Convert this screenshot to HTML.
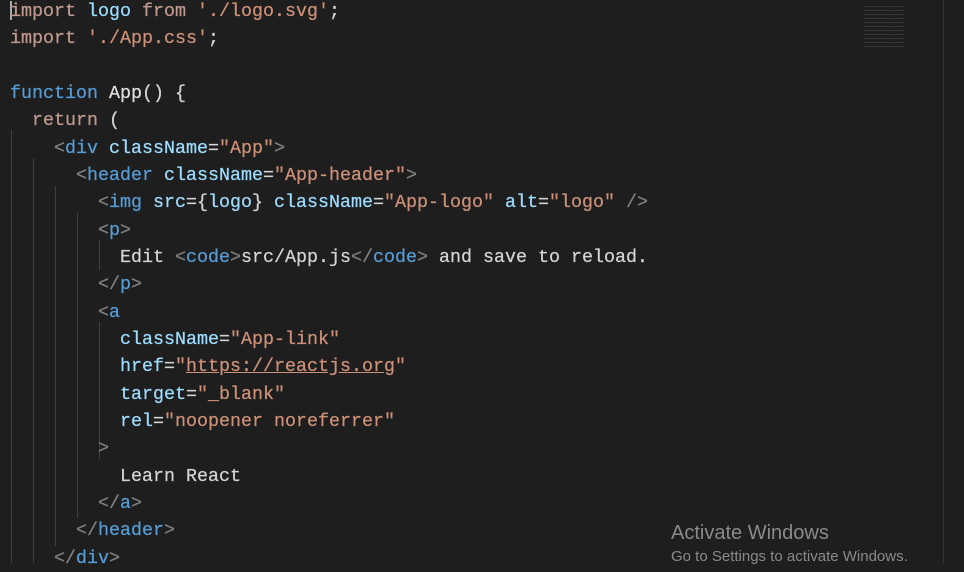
<!DOCTYPE html>
<html><head><style>
body{margin:0;width:964px;height:563px;background:#1e1e1e;overflow:hidden;position:relative;font-family:"Liberation Mono",monospace}
#code{position:absolute;left:10px;top:-2px;font-size:18.33px;line-height:27.33px;white-space:pre;color:#d4d4d4;-webkit-text-stroke:0.25px}
.k{color:#c09a8f}.s{color:#ce9178}.v{color:#9cdcfe}.f{color:#569cd6}.p{color:#808080}.t{color:#569cd6}.a{color:#9cdcfe}.w{color:#e0e0e0}
.g{position:absolute;width:1px;background:#404040}
.wm{position:absolute;font-family:"Liberation Sans",sans-serif;color:#8a8a8a}
</style></head><body>
<div class="g" style="left:11px;top:130px;height:433px"></div>
<div class="g" style="left:33px;top:158px;height:405px"></div>
<div class="g" style="left:55px;top:186px;height:360px"></div>
<div class="g" style="left:77px;top:213px;height:305px"></div>
<div class="g" style="left:99px;top:240px;height:30px"></div>
<div class="g" style="left:99px;top:322px;height:137px"></div>
<div style="position:absolute;left:10px;top:1px;width:2px;height:19px;background:#aaa"></div>
<div id="code"><span class="k">import</span> <span class="v">logo</span> <span class="k">from</span> <span class="s">'./logo.svg'</span>;
<span class="k">import</span> <span class="s">'./App.css'</span>;

<span class="f">function</span> <span class="w">App</span>() {
  <span class="k">return</span> (
    <span class="p">&lt;</span><span class="t">div</span> <span class="a">className</span>=<span class="s">"App"</span><span class="p">&gt;</span>
      <span class="p">&lt;</span><span class="t">header</span> <span class="a">className</span>=<span class="s">"App-header"</span><span class="p">&gt;</span>
        <span class="p">&lt;</span><span class="t">img</span> <span class="a">src</span>={<span class="v">logo</span>} <span class="a">className</span>=<span class="s">"App-logo"</span> <span class="a">alt</span>=<span class="s">"logo"</span> <span class="p">/&gt;</span>
        <span class="p">&lt;</span><span class="t">p</span><span class="p">&gt;</span>
          Edit <span class="p">&lt;</span><span class="t">code</span><span class="p">&gt;</span>src/App.js<span class="p">&lt;/</span><span class="t">code</span><span class="p">&gt;</span> and save to reload.
        <span class="p">&lt;/</span><span class="t">p</span><span class="p">&gt;</span>
        <span class="p">&lt;</span><span class="t">a</span>
          <span class="a">className</span>=<span class="s">"App-link"</span>
          <span class="a">href</span>=<span class="s">"<u>https://reactjs.org</u>"</span>
          <span class="a">target</span>=<span class="s">"_blank"</span>
          <span class="a">rel</span>=<span class="s">"noopener noreferrer"</span>
        <span class="p">&gt;</span>
          Learn React
        <span class="p">&lt;/</span><span class="t">a</span><span class="p">&gt;</span>
      <span class="p">&lt;/</span><span class="t">header</span><span class="p">&gt;</span>
    <span class="p">&lt;/</span><span class="t">div</span><span class="p">&gt;</span>
</div>
<div style="position:absolute;left:864px;top:3px;width:40px;height:44px;opacity:.3;background:repeating-linear-gradient(#1e1e1e 0 3px,#667 3px 4px)"></div>
<div class="g" style="left:943px;top:0;height:563px;background:#333"></div>
<div class="wm" style="left:671px;top:522px;font-size:20px">Activate Windows</div>
<div class="wm" style="left:671px;top:548px;font-size:15px">Go to Settings to activate Windows.</div>
</body></html>
